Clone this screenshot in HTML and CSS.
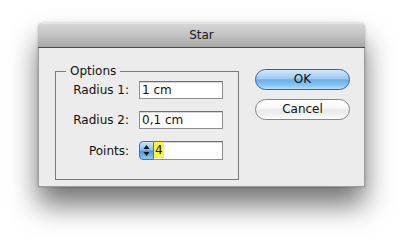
FILE: index.html
```html
<!DOCTYPE html>
<html>
<head>
<meta charset="utf-8">
<link rel="stylesheet" href="styles.css">
</head>
<body>
<div class="window">
  <div class="titlebar">Star</div>
  <div class="content">
    <fieldset class="options">
      <legend>Options</legend>
      <div class="form">
        <label class="lbl">Radius 1:</label>
        <div class="field">1 cm</div>
        <label class="lbl">Radius 2:</label>
        <div class="field">0,1 cm</div>
        <label class="lbl">Points:</label>
        <div class="spin">
          <span class="stepper">
            <svg width="15" height="19" viewBox="0 0 15 19">
              <polygon points="4.5,8 10.5,8 7.5,4" fill="#111"/>
              <polygon points="4.5,11 10.5,11 7.5,15" fill="#111"/>
            </svg>
          </span>
          <div class="field field-num"><span class="sel">4</span></div>
        </div>
      </div>
    </fieldset>
    <div class="buttons">
      <button class="btn btn-ok">OK</button>
      <button class="btn btn-cancel">Cancel</button>
    </div>
  </div>
</div>
</body>
</html>
```
FILE: styles.css
```css
html {
  margin: 0;
  height: 100%;
  background: #ffffff;
}
body {
  box-sizing: border-box;
  margin: 0;
  min-height: 100%;
  padding: 23px 0 0 38px;
  font-family: "DejaVu Sans", "Liberation Sans", sans-serif;
  font-size: 12px;
  color: #111;
}
.window {
  box-sizing: border-box;
  width: 327px;
  height: 164px;
  background: #ececec;
  border: 1px solid #9c9c9c;
  border-top: none;
  border-radius: 5px 5px 0 0;
  box-shadow: 0 18px 28px rgba(0,0,0,0.55), 0 0 3px rgba(0,0,0,0.22);
  display: flex;
  flex-direction: column;
}
.titlebar {
  box-sizing: border-box;
  height: 25px;
  line-height: 23px;
  text-align: center;
  font-size: 12px;
  color: #1a1a1a;
  background: linear-gradient(#d6d6d6, #c2c2c2 50%, #a6a6a6);
  border-top: 1px solid #e4e4e4;
  border-bottom: 1px solid #4a4a4a;
  border-radius: 5px 5px 0 0;
  margin: 0 -1px;
}
.content {
  display: flex;
  align-items: flex-start;
  padding: 16px 0 0 16px;
  gap: 16px;
}
.options {
  box-sizing: border-box;
  width: 184px;
  margin: 0;
  padding: 2px 15px 19px 0;
  border: 1px solid #7a7a7a;
}
.options legend {
  margin-left: 10px;
  padding: 0 4px;
  line-height: 15px;
  font-size: 12px;
}
.form {
  display: grid;
  grid-template-columns: auto 84px;
  justify-content: end;
  column-gap: 10px;
  row-gap: 12px;
  align-items: center;
}
.lbl {
  text-align: right;
  justify-self: end;
}
.field {
  box-sizing: border-box;
  height: 18px;
  line-height: 16px;
  padding: 0 2px;
  background: #fff;
  border: 1px solid #8e8e8e;
  border-top-color: #6f6f6f;
  box-shadow: inset 0 1px 0 #d6d6d6;
  white-space: nowrap;
}
.spin {
  display: flex;
  height: 19px;
}
.stepper {
  box-sizing: border-box;
  width: 15px;
  height: 19px;
  border: 1px solid #4d6f98;
  border-radius: 4px 0 0 4px;
  background: linear-gradient(#cfe6fb, #86bff0 45%, #4e97e3 55%, #8cc9f6);
  display: block;
}
.stepper svg {
  display: block;
  margin: -1px 0 0 -1px;
}
.field-num {
  flex: 1;
  height: 19px;
  padding: 0;
  border-left: none;
}
.sel {
  display: inline-block;
  background: #fff23a;
  padding: 0 1px;
  line-height: 16px;
}
.buttons {
  display: flex;
  flex-direction: column;
  gap: 9px;
  padding-top: 5px;
}
.btn {
  box-sizing: border-box;
  width: 95px;
  height: 21px;
  border-radius: 11px;
  font-family: "DejaVu Sans", "Liberation Sans", sans-serif;
  font-size: 12px;
  color: #111;
  padding: 0;
  line-height: 19px;
}
.btn-ok {
  border: 1px solid #3a6396;
  background: linear-gradient(#d2e8fc, #9dcaf2 45%, #6aaee9 52%, #8fcaf8 85%, #b9e2fd);
}
.btn-cancel {
  border: 1px solid #878787;
  background: linear-gradient(#ffffff, #f6f6f6 45%, #e8e8e8 52%, #f4f4f4 85%, #ffffff);
}
```
